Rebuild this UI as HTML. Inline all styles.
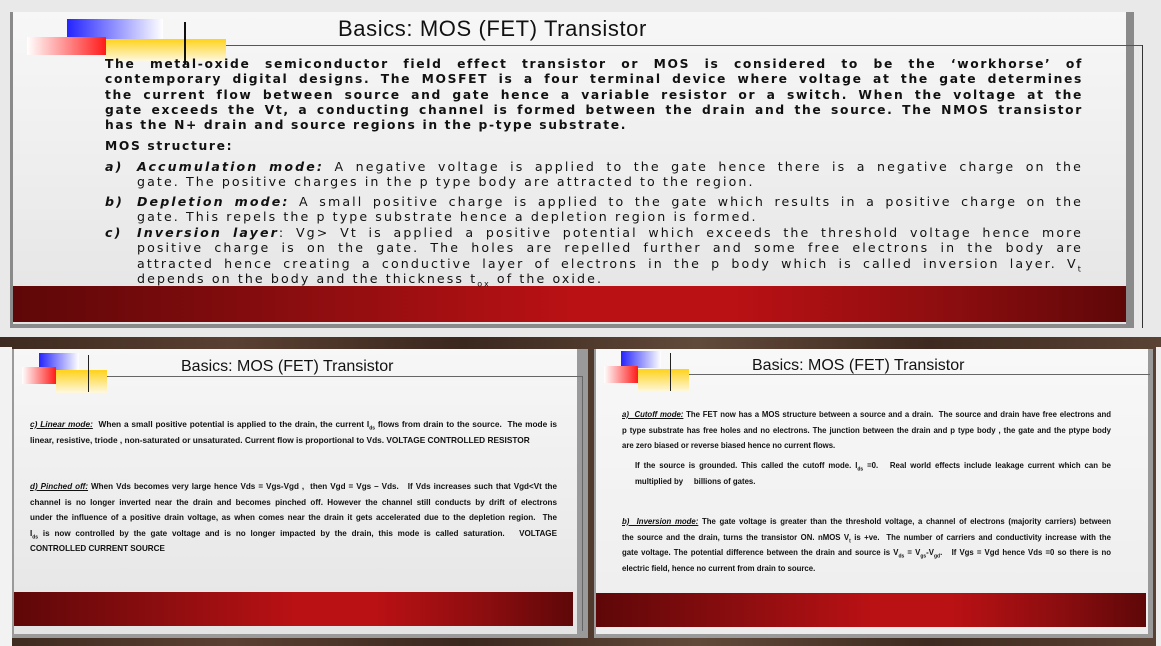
<!DOCTYPE html>
<html><head><meta charset="utf-8"><style>
*{margin:0;padding:0;box-sizing:border-box}
body{width:1161px;height:646px;overflow:hidden;position:relative;background:linear-gradient(90deg,#3e2a20,#5a4032 20%,#3a271e 40%,#624a3a 60%,#3e2a20 80%,#5a4234);font-family:"Liberation Sans",sans-serif;color:#111}
.abs{position:absolute}
.slide{position:absolute;background:linear-gradient(180deg,#f7f7f7,#ececec 60%,#e4e4e4)}
.band{position:absolute;background:linear-gradient(90deg,#5e0708,#8a0d0f 25%,#b91114 50%,#b91114 65%,#8a0d0f 85%,#5e0708)}
.deco1{position:absolute;background:linear-gradient(90deg,#2424ff,#fff)}
.deco2{position:absolute;background:linear-gradient(270deg,#ff1a1a,#fff)}
.deco3{position:absolute;background:linear-gradient(180deg,#ffd21a,#fff8e0)}
.J{text-align:justify;text-align-last:justify;white-space:nowrap}
.L{text-align:left;white-space:nowrap}
.top{font-family:"DejaVu Sans",sans-serif;font-weight:bold;font-size:12.3px;letter-spacing:1.65px;line-height:15.3px}
.lst{position:absolute;left:105px;width:978px;font-family:"DejaVu Sans",sans-serif;font-size:12.6px;letter-spacing:2.1px;line-height:15.3px}
.lst .in{padding-left:32px}
.lst b{font-style:italic}
.lb{display:inline-block;width:32px;font-weight:bold;font-style:italic}
.sm{position:absolute;font-size:7.8px;font-weight:bold;line-height:15.5px}
.sm u.i{font-style:italic}
sub{line-height:0}
</style></head><body>
<div class="abs" style="left:0;top:0;width:1161px;height:337px;background:#e9e9e9"></div>
<div class="abs" style="left:10px;top:12px;width:1124px;height:316px;background:#8a8a8a"></div>
<div class="slide" style="left:13px;top:12px;width:1113px;height:312px"></div>
<div class="band" style="left:13px;top:286px;width:1113px;height:36px"></div>
<div class="abs" style="left:145px;top:45px;width:997px;height:1px;background:#555"></div>
<div class="abs" style="left:1142px;top:45px;width:1px;height:283px;background:#333"></div>
<div class="deco1" style="left:67px;top:19px;width:96px;height:20px"></div>
<div class="deco2" style="left:27px;top:37px;width:79px;height:18px"></div>
<div class="deco3" style="left:106px;top:39px;width:120px;height:22px"></div>
<div class="abs" style="left:184px;top:22px;width:2px;height:42px;background:#111"></div>
<div class="abs" style="left:338px;top:16px;font-size:22px;letter-spacing:0.6px">Basics: MOS (FET) Transistor</div>
<div class="abs top" style="left:105px;top:57px;width:978px">
<div class="J">The metal-oxide semiconductor field effect transistor or MOS is considered to be the ‘workhorse’ of</div>
<div class="J">contemporary digital designs. The MOSFET is a four terminal device where voltage at the gate determines</div>
<div class="J">the current flow between source and gate hence a variable resistor or a switch. When the voltage at the</div>
<div class="J">gate exceeds the Vt, a conducting channel is formed between the drain and the source. The NMOS transistor</div>
<div class="L">has the N+ drain and source regions in the p-type substrate.</div>
<div class="L" style="margin-top:6px">MOS structure:</div>
</div>
<div class="lst" style="top:159px"><div class="J"><span class="lb">a)</span><b>Accumulation mode:</b> A negative voltage is applied to the gate hence there is a negative charge on the</div><div class="in L">gate. The positive charges in the p type body are attracted to the region.</div></div>
<div class="lst" style="top:194px"><div class="J"><span class="lb">b)</span><b>Depletion mode:</b> A small positive charge is applied to the gate which results in a positive charge on the</div><div class="in L">gate. This repels the p type substrate hence a depletion region is formed.</div></div>
<div class="lst" style="top:225px"><div class="J"><span class="lb">c)</span><b>Inversion layer</b>: Vg&gt; Vt is applied a positive potential which exceeds the threshold voltage hence more</div>
<div class="in"><div class="J">positive charge is on the gate. The holes are repelled further and some free electrons in the body are</div><div class="J">attracted hence creating a conductive layer of electrons in the p body which is called inversion layer. V<sub style="font-size:8px">t</sub></div><div class="L">depends on the body and the thickness t<sub style="font-size:8px">ox</sub> of the oxide.</div></div></div>

<div class="abs" style="left:0;top:347px;width:12px;height:299px;background:#f2f2f2"></div>
<div class="abs" style="left:12px;top:349px;width:576px;height:289px;background:#9a9a9a"></div>
<div class="slide" style="left:14px;top:349px;width:563px;height:285px"></div>
<div class="band" style="left:14px;top:592px;width:559px;height:34px"></div>
<div class="abs" style="left:86px;top:376px;width:496px;height:1px;background:#666"></div>
<div class="abs" style="left:582px;top:376px;width:1px;height:255px;background:#666"></div>
<div class="deco1" style="left:39px;top:353px;width:40px;height:17px"></div>
<div class="deco2" style="left:22px;top:367px;width:34px;height:17px"></div>
<div class="deco3" style="left:56px;top:370px;width:51px;height:23px"></div>
<div class="abs" style="left:88px;top:355px;width:1px;height:37px;background:#222"></div>
<div class="abs" style="left:181px;top:358px;font-size:16px">Basics: MOS (FET) Transistor</div>
<div class="sm" style="left:30px;top:417px;width:527px;font-size:8.3px"><div class="J"><u class="i">c) Linear mode:</u>&nbsp; When a small positive potential is applied to the drain, the current I<sub style="font-size:5px">ds</sub> flows from drain to the source.&nbsp; The mode is</div><div class="L">linear, resistive, triode , non-saturated or unsaturated. Current flow is proportional to Vds. VOLTAGE CONTROLLED RESISTOR</div></div>
<div class="sm" style="left:30px;top:479px;width:527px;font-size:8.1px"><div class="J"><u class="i">d) Pinched off:</u> When Vds becomes very large hence Vds = Vgs-Vgd ,&nbsp; then Vgd = Vgs – Vds.&nbsp;&nbsp; If Vds increases such that Vgd&lt;Vt the</div><div class="J">channel is no longer inverted near the drain and becomes pinched off. However the channel still conducts by drift of electrons</div><div class="J">under the influence of a positive drain voltage, as when comes near the drain it gets accelerated due to the depletion region.&nbsp; The</div><div class="J">I<sub style="font-size:5px">ds</sub> is now controlled by the gate voltage and is no longer impacted by the drain, this mode is called saturation.&nbsp;&nbsp; VOLTAGE</div><div class="L">CONTROLLED CURRENT SOURCE</div></div>

<div class="abs" style="left:594px;top:349px;width:559px;height:289px;background:#9a9a9a"></div>
<div class="slide" style="left:596px;top:349px;width:552px;height:285px;background:linear-gradient(180deg,#f8f8f8,#ededed)"></div>
<div class="band" style="left:596px;top:593px;width:550px;height:34px"></div>
<div class="abs" style="left:1156px;top:347px;width:5px;height:299px;background:#eee"></div>
<div class="abs" style="left:660px;top:374px;width:490px;height:1px;background:#666"></div>
<div class="deco1" style="left:621px;top:351px;width:40px;height:17px"></div>
<div class="deco2" style="left:604px;top:366px;width:34px;height:17px"></div>
<div class="deco3" style="left:638px;top:369px;width:51px;height:23px"></div>
<div class="abs" style="left:670px;top:353px;width:1px;height:38px;background:#222"></div>
<div class="abs" style="left:752px;top:357px;font-size:16px">Basics: MOS (FET) Transistor</div>
<div class="sm" style="left:622px;top:407px;width:489px"><div class="J"><u class="i">a)&nbsp; Cutoff mode:</u> The FET now has a MOS structure between a source and a drain.&nbsp; The source and drain have free electrons and</div><div class="J">p type substrate has free holes and no electrons. The junction between the drain and p type body , the gate and the ptype body</div><div class="L">are zero biased or reverse biased hence no current flows.</div></div>
<div class="sm" style="left:635px;top:458px;width:476px"><div class="J">If the source is grounded. This called the cutoff mode. I<sub style="font-size:5px">ds</sub> =0.&nbsp;&nbsp; Real world effects include leakage current which can be</div><div class="L">multiplied by&nbsp;&nbsp;&nbsp;&nbsp; billions of gates.</div></div>
<div class="sm" style="left:622px;top:514px;width:489px"><div class="J"><u class="i">b)&nbsp; Inversion mode:</u> The gate voltage is greater than the threshold voltage, a channel of electrons (majority carriers) between</div><div class="J">the source and the drain, turns the transistor ON. nMOS V<sub style="font-size:5px">t</sub> is +ve.&nbsp; The number of carriers and conductivity increase with the</div><div class="J">gate voltage. The potential difference between the drain and source is V<sub style="font-size:5px">ds</sub> = V<sub style="font-size:5px">gs</sub>-V<sub style="font-size:5px">gd</sub>.&nbsp;&nbsp; If Vgs = Vgd hence Vds =0 so there is no</div><div class="L">electric field, hence no current from drain to source.</div></div>
</body></html>
